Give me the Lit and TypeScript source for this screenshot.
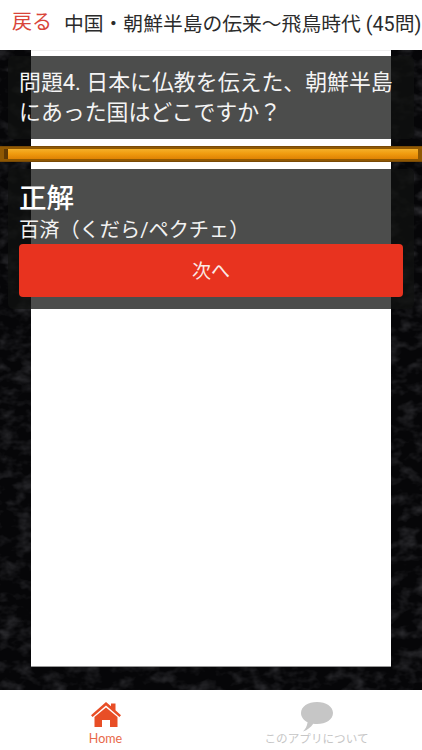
import { LitElement, html, css, svg } from "lit";
import { customElement } from "lit/decorators.js";

@customElement("app-root")
export class AppRoot extends LitElement {
  static styles = css`
    :host {
      display: block;
      width: 422px;
      height: 750px;
      overflow: hidden;
      background: #fff;
      font-family: "Roboto", "Noto Sans CJK JP", sans-serif;
    }
    .page {
      display: flex;
      flex-direction: column;
      height: 750px;
    }
    .header {
      height: 50px;
      flex: none;
      display: flex;
      align-items: center;
      background: #fff;
      white-space: nowrap;
      overflow: hidden;
      padding-bottom: 6px;
      box-sizing: border-box;
    }
    .back {
      color: #d9453a;
      font-size: 20px;
      margin-left: 12px;
      width: 52px;
      flex: none;
      position: relative;
      top: -2px;
    }
    .title {
      color: #2b2b2b;
      font-size: 19.8px;
    }
    .stage {
      flex: 1;
      display: grid;
      grid-template: 1fr / 1fr;
      background: #060608;
      overflow: hidden;
      min-height: 0;
    }
    .stage > * {
      grid-area: 1 / 1;
      min-width: 0;
      min-height: 0;
    }
    .texture {
      width: 100%;
      height: 100%;
      display: block;
    }
    .paper-wrap {
      padding: 0 31px 23px;
      display: flex;
    }
    .paper {
      flex: 1;
      background: #fff;
      border-top: 1px solid #eee;
      border-bottom: 1px solid #999;
    }
    .content {
      display: flex;
      flex-direction: column;
      padding-top: 6px;
    }
    .panel {
      margin: 0 8px;
      background: rgba(16, 18, 16, 0.75);
      border-radius: 5px;
      color: #fff;
    }
    .question {
      height: 83px;
      box-sizing: border-box;
      padding: 12px 11px 0;
      font-size: 21.9px;
      line-height: 30px;
      color: #f4f4f4;
      white-space: nowrap;
    }
    .progress {
      margin-top: 7px;
      height: 16px;
      box-sizing: border-box;
      background: #8f5803;
      padding: 2px 4px;
      display: flex;
      border-top: 1px solid #7a4a05;
      border-bottom: 1px solid #7a4a05;
    }
    .progress-start {
      width: 4px;
      flex: none;
      background: #5f3803;
    }
    .progress-fill {
      flex: 1;
      background: linear-gradient(#f4b02a 0%, #f09c10 45%, #de8203 100%);
    }
    .answer {
      margin-top: 7px;
      height: 140px;
      box-sizing: border-box;
      padding: 13px 11px 0;
      display: flex;
      flex-direction: column;
    }
    .answer-label {
      font-size: 27.5px;
      line-height: 34px;
      font-weight: 500;
    }
    .answer-text {
      font-size: 20.2px;
      line-height: 28px;
      color: #f2f2f2;
      white-space: nowrap;
    }
    .next {
      height: 53px;
      flex: none;
      border: 0;
      border-radius: 4px;
      background: #e8331f;
      color: #fbe9e6;
      font: inherit;
      font-size: 19px;
      padding: 0 0 3px;
    }
    .tabs {
      height: 60px;
      flex: none;
      display: grid;
      grid-template-columns: 1fr 1fr;
      background: #fff;
    }
    .tab {
      display: flex;
      flex-direction: column;
      align-items: center;
      padding-top: 12px;
      font-size: 11.6px;
      line-height: 14px;
      color: #c6c6c6;
    }
    .tab svg {
      width: 34px;
      height: 30px;
      display: block;
      flex: none;
    }
    .tab.active {
      color: #e8694a;
      font-family: "Lato", sans-serif;
      font-size: 12.5px;
    }
  `;

  render() {
    return html`
      <div class="page">
        <div class="header">
          <span class="back">戻る</span>
          <span class="title">中国・朝鮮半島の伝来〜飛鳥時代 (45問)</span>
        </div>
        <div class="stage">
          <svg class="texture" viewBox="0 0 422 640" preserveAspectRatio="none">
            ${svg`
              <filter id="grain" x="0" y="0" width="100%" height="100%">
                <feTurbulence type="fractalNoise" baseFrequency="0.06 0.09" numOctaves="3" seed="4" />
                <feColorMatrix type="matrix" values="0 0 0 0 0.16  0 0 0 0 0.16  0 0 0 0 0.18  0.8 0 0 0 -0.36" />
              </filter>
              <rect width="422" height="640" filter="url(#grain)" />
            `}
          </svg>
          <div class="paper-wrap"><div class="paper"></div></div>
          <div class="content">
            <div class="panel question">問題4. 日本に仏教を伝えた、朝鮮半島<br />にあった国はどこですか？</div>
            <div class="progress">
              <div class="progress-start"></div>
              <div class="progress-fill"></div>
            </div>
            <div class="panel answer">
              <div class="answer-label">正解</div>
              <div class="answer-text">百済（くだら/ペクチェ）</div>
              <button class="next">次へ</button>
            </div>
          </div>
        </div>
        <div class="tabs">
          <div class="tab active">
            <svg viewBox="0 0 34 30">
              <path fill="#e84e26" d="M17 0 L22 4.3 V1.5 H26.5 V8.2 L32 13.2 L30.4 15 L17 3.6 L3.6 15 L2 13.2 Z" />
              <path fill="#e84e26" d="M5.5 15 L17 5.5 L28.5 15 V25 H21 V18 H13 V25 H5.5 Z" />
            </svg>
            <span>Home</span>
          </div>
          <div class="tab">
            <svg viewBox="0 0 34 30">
              <path fill="#c6c6c6" d="M17 0 C26 0 33 4.6 33 11 C33 17.4 26 22 17 22 C15.6 22 14.4 21.9 13.2 21.7 C11 25 7.5 28 3 29.5 C5.5 27 7 24 7.6 20.2 C3.5 18.2 1 14.8 1 11 C1 4.6 8 0 17 0 Z" />
            </svg>
            <span>このアプリについて</span>
          </div>
        </div>
      </div>
    `;
  }
}
